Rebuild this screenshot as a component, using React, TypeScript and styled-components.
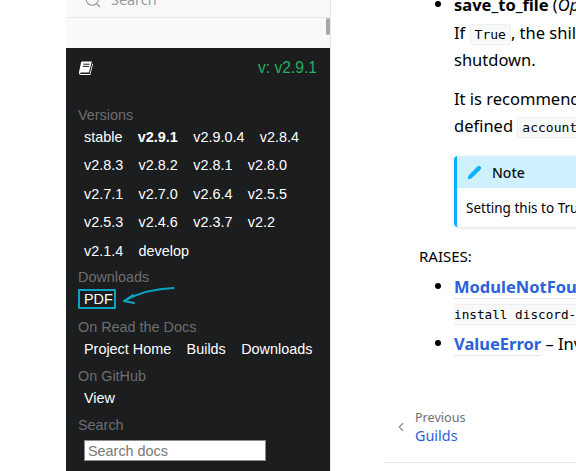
import React from "react";
import styled, { createGlobalStyle } from "styled-components";
import { Search, Pencil, ChevronLeft } from "lucide-react";

const Global = createGlobalStyle`
  html, body { margin: 0; padding: 0; width: 576px; height: 471px; overflow: hidden; background: #fff; }
  * { box-sizing: border-box; }
`;

const Page = styled.div`
  display: flex;
  width: 576px;
  height: 471px;
  overflow: hidden;
  font-family: "Noto Sans", sans-serif;
  color: #000;
`;

const Gutter = styled.div`
  width: 66px;
  flex: none;
`;

const Sidebar = styled.aside`
  width: 265px;
  flex: none;
  background: #f8f9fb;
  border-right: 1px solid #e6e6e6;
  position: relative;
  display: flex;
  flex-direction: column;
`;

const SearchBar = styled.div`
  height: 18px;
  flex: none;
  border-bottom: 1px solid #e8e9eb;
  padding-left: 18px;
  display: flex;
  align-items: flex-end;
  overflow: hidden;
  color: #9a9a9a;
  font-size: 14.4px;
  line-height: 20px;
`;

const SearchRow = styled.div`
  display: flex;
  align-items: center;
  gap: 9px;
  margin-bottom: 7px;
  flex: none;
`;

const Thumb = styled.div`
  position: absolute;
  top: 18px;
  right: 0;
  width: 4px;
  height: 17px;
  background: #a8a8a8;
  border-radius: 2px;
`;

const Panel = styled.div`
  margin-top: 30px;
  width: 264px;
  height: 430px;
  background: #1c1d1f;
  font-family: "Liberation Sans", Arial, sans-serif;
  font-size: 14.4px;
  position: relative;
  flex: none;
`;

const PanelHead = styled.div`
  display: flex;
  justify-content: space-between;
  align-items: center;
  height: 40px;
  padding: 0 13px 0 12px;
`;

const VersionTag = styled.span`
  color: #27ae60;
  font-size: 15.6px;
`;

const PanelBody = styled.div`
  padding: 19px 12px 0;
`;

const GroupLabel = styled.div`
  color: #6e6e6e;
  font-size: 14.4px;
  line-height: 16px;
`;

const LinkList = styled.div<{ $after?: number }>`
  display: flex;
  flex-wrap: wrap;
  column-gap: 15.4px;
  padding: 0 4px 0 6px;
  line-height: 28.4px;
  margin-bottom: ${(p) => p.$after ?? 5}px;
`;

const PanelLink = styled.a<{ $current?: boolean }>`
  color: #fff;
  font-weight: ${(p) => (p.$current ? 700 : 400)};
`;

const PdfRow = styled.div`
  display: flex;
  margin: 4px 0 10px;
`;

const PdfButton = styled.a`
  display: block;
  width: 38px;
  height: 20px;
  border: 2px solid #0aa3c2;
  border-radius: 1px;
  color: #fff;
  line-height: 17px;
  padding-left: 4px;
`;

const ArrowMark = styled.svg`
  position: absolute;
  left: 52px;
  top: 236px;
`;

const SearchField = styled.input`
  display: block;
  width: 182px;
  height: 21px;
  margin: 7px 0 0 6px;
  padding: 0 3px;
  background: #fff;
  border: 1px solid #8c8c8c;
  border-radius: 0;
  font-family: "Liberation Sans", Arial, sans-serif;
  font-size: 14.4px;
  &::placeholder { color: #777; opacity: 1; }
`;

const Main = styled.main`
  flex: 1;
  min-width: 0;
  position: relative;
  overflow: hidden;
  padding-left: 88px;
  font-size: 16.5px;
  line-height: 27px;
`;

const Article = styled.div`
  margin-top: -9px;
  width: 600px;
  padding-left: 35px;
  white-space: nowrap;
`;

const BulletItem = styled.div<{ $gap?: number }>`
  position: relative;
  margin-top: ${(p) => p.$gap ?? 0}px;
  &::before {
    content: "";
    position: absolute;
    left: -19px;
    top: 10px;
    width: 6px;
    height: 6px;
    border-radius: 50%;
    background: #000;
  }
`;

const Para = styled.p`
  margin: 0;
`;

const LeadPara = styled(Para)`
  margin-top: 1px;
`;

const SpacedPara = styled(Para)`
  margin-top: 12px;
`;

const Strong = styled.strong`
  font-weight: 700;
`;

const Code = styled.code`
  font-family: "DejaVu Sans Mono", monospace;
  font-size: 13px;
  line-height: 1;
  background: #f8f9fb;
  border: 1px solid #eeeeee;
  border-radius: 3px;
  padding: 2px 4px;
`;

const Note = styled.div`
  margin-top: 17px;
  width: 400px;
  height: 71px;
  border-left: 3px solid #0ab0ff;
  border-radius: 4px;
  box-shadow: 0 1px 4px rgba(0, 0, 0, 0.12);
  font-size: 13.5px;
`;

const NoteTitle = styled.div`
  height: 32px;
  background: #cff0ff;
  display: flex;
  align-items: center;
  gap: 10px;
  padding-left: 10px;
  font-weight: 500;
  font-size: 14px;
  color: #111;
`;

const NoteBody = styled.div`
  padding: 7px 9px;
`;

const RaisesLabel = styled.div`
  margin: 17px 0 0 -35px;
  font-size: 15px;
  line-height: 24px;
`;

const ErrorLink = styled.a`
  color: #2962d9;
  font-weight: 700;
  font-size: 16.5px;
  border-bottom: 1px solid #e4e6ec;
`;

const InstallLine = styled.div`
  margin-top: 4px;
  height: 21px;
  background: #f8f9fb;
  border-top: 1px solid #eeeeee;
  border-bottom: 1px solid #eeeeee;
  font-family: "DejaVu Sans Mono", monospace;
  font-size: 12.7px;
  line-height: 20px;
`;

const Pager = styled.nav`
  position: absolute;
  left: 53px;
  right: 0;
  top: 409px;
  height: 54px;
  border-bottom: 1px solid #e8e8e8;
  display: flex;
  align-items: center;
  gap: 7px;
  padding: 0 0 17px 10px;
`;

const PagerText = styled.div`
  display: flex;
  flex-direction: column;
`;

const PagerSmall = styled.span`
  font-size: 12.6px;
  line-height: 18px;
  color: #6b6f76;
`;

const PagerTitle = styled.span`
  font-size: 14.4px;
  line-height: 18px;
  color: #2962d9;
`;

const versions = [
  "stable", "v2.9.1", "v2.9.0.4", "v2.8.4", "v2.8.3", "v2.8.2", "v2.8.1", "v2.8.0",
  "v2.7.1", "v2.7.0", "v2.6.4", "v2.5.5", "v2.5.3", "v2.4.6", "v2.3.7", "v2.2",
  "v2.1.4", "develop",
];

export default function App() {
  return (
    <Page>
      <Global />
      <Gutter />
      <Sidebar>
        <SearchBar>
          <SearchRow>
            <Search size={18} strokeWidth={1.5} />
            <span>Search</span>
          </SearchRow>
        </SearchBar>
        <Thumb />
        <Panel>
          <PanelHead>
            <svg width="16" height="16" viewBox="0 0 16 16">
              <path d="M4 1.5h10l-.6 1.2-2.4 9.8H3.2c-1 0-1.2.8-1.1 1 .1.3.4.6 1 .6h8.6l2.6-10.5.7.4-2.7 10.9H3c-1.6 0-2.4-1.2-2-2.6L3 2.6C3.2 2 3.5 1.5 4 1.5z" fill="#fff" />
              <path d="M5.4 4.2h6.2M4.8 6.4h6.2" stroke="#1c1d1f" strokeWidth="1" />
            </svg>
            <VersionTag>v: v2.9.1</VersionTag>
          </PanelHead>
          <PanelBody>
            <GroupLabel>Versions</GroupLabel>
            <LinkList $after={3.5}>
              {versions.map((v) => (
                <PanelLink key={v} $current={v === "v2.9.1"}>{v}</PanelLink>
              ))}
            </LinkList>
            <GroupLabel>Downloads</GroupLabel>
            <PdfRow>
              <PdfButton>PDF</PdfButton>
            </PdfRow>
            <GroupLabel>On Read the Docs</GroupLabel>
            <LinkList>
              <PanelLink>Project Home</PanelLink>
              <PanelLink>Builds</PanelLink>
              <PanelLink>Downloads</PanelLink>
            </LinkList>
            <GroupLabel>On GitHub</GroupLabel>
            <LinkList>
              <PanelLink>View</PanelLink>
            </LinkList>
            <GroupLabel>Search</GroupLabel>
            <SearchField placeholder="Search docs" readOnly />
          </PanelBody>
          <ArrowMark width="60" height="24" viewBox="0 0 60 24" fill="none">
            <path d="M55.5 4C40 4.5 22 8 6 17M6 17l9-6M6 17l10 2" stroke="#0aa3c2" strokeWidth="2" strokeLinecap="round" />
          </ArrowMark>
        </Panel>
      </Sidebar>
      <Main>
        <Article>
          <BulletItem>
            <Para><Strong>save_to_file</Strong> (<em>Optional</em>)</Para>
            <LeadPara>If <Code>True</Code>, the shill list is saved on</LeadPara>
            <Para>shutdown.</Para>
            <SpacedPara>It is recommended to use a user</SpacedPara>
            <Para>defined <Code>account_info</Code> file</Para>
          </BulletItem>
          <Note>
            <NoteTitle>
              <Pencil size={15} color="#0ab0ff" fill="#0ab0ff" strokeWidth={1.5} />
              <span>Note</span>
            </NoteTitle>
            <NoteBody>Setting this to True will save</NoteBody>
          </Note>
          <RaisesLabel>RAISES:</RaisesLabel>
          <BulletItem $gap={5}>
            <Para><ErrorLink>ModuleNotFoundError</ErrorLink></Para>
            <InstallLine>install discord-py</InstallLine>
          </BulletItem>
          <BulletItem $gap={5}>
            <Para><ErrorLink>ValueError</ErrorLink> – Invalid value</Para>
          </BulletItem>
        </Article>
        <Pager>
          <ChevronLeft size={14} color="#8a8a8a" />
          <PagerText>
            <PagerSmall>Previous</PagerSmall>
            <PagerTitle>Guilds</PagerTitle>
          </PagerText>
        </Pager>
      </Main>
    </Page>
  );
}
